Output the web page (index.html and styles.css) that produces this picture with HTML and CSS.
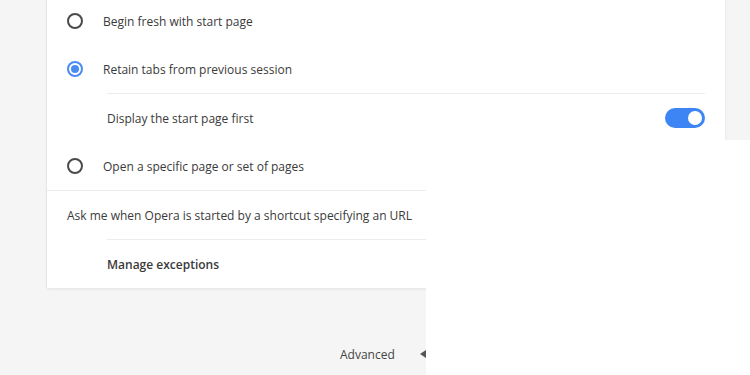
FILE: index.html
```html
<!DOCTYPE html>
<html>
<head>
<meta charset="utf-8">
<link rel="stylesheet" href="styles.css">
</head>
<body>
<div class="page">
  <section class="card">
    <div class="row radio-row">
      <span class="radio"></span>
      <span class="label">Begin fresh with start page</span>
    </div>
    <div class="row radio-row">
      <span class="radio checked"></span>
      <span class="label">Retain tabs from previous session</span>
    </div>
    <div class="row sub-row">
      <span class="label">Display the start page first</span>
      <span class="toggle on"><span class="knob"></span></span>
    </div>
    <div class="row radio-row no-border">
      <span class="radio"></span>
      <span class="label">Open a specific page or set of pages</span>
    </div>
    <div class="row plain-row">
      <span class="label">Ask me when Opera is started by a shortcut specifying an URL</span>
    </div>
    <div class="row sub-row bold-row">
      <span class="label">Manage exceptions</span>
    </div>
  </section>
  <div class="advanced">
    <span class="adv-label">Advanced</span>
    <span class="caret"></span>
  </div>
</div>
<div class="overlay"></div>
</body>
</html>
```

FILE: styles.css
```css
html, body {
  margin: 0;
  padding: 0;
}
body {
  background: #f5f5f5;
  font-family: "Open Sans", "Noto Sans", sans-serif;
  font-size: 12px;
  color: #3a3a3a;
  width: 750px;
  height: 375px;
  overflow: hidden;
  position: relative;
}
.page {
  padding-left: 47px;
  width: 678px;
}
.card {
  background: #ffffff;
  margin-top: -3px;
  box-shadow: 0 1px 3px rgba(0, 0, 0, 0.08), -1px 0 0 rgba(0,0,0,0.03);
  display: flex;
  flex-direction: column;
}
.row {
  height: 48px;
  display: flex;
  align-items: center;
  box-sizing: border-box;
}
.radio-row {
  padding-left: 20px;
}
.radio-row .label {
  margin-left: 20px;
}
.radio {
  width: 16px;
  height: 16px;
  box-sizing: border-box;
  border: 2px solid #4a4a4a;
  border-radius: 50%;
  flex: none;
  position: relative;
}
.radio.checked {
  border-color: #4a8af4;
}
.radio.checked::after {
  content: "";
  position: absolute;
  left: 2px;
  top: 2px;
  width: 8px;
  height: 8px;
  border-radius: 50%;
  background: #4a8af4;
}
.sub-row {
  margin-left: 60px;
  margin-right: 20px;
  border-top: 1px solid #ececec;
  justify-content: space-between;
  height: 49px;
}
.no-border {
  border-bottom: 1px solid #ececec;
  height: 49px;
}
.plain-row {
  padding-left: 20px;
}
.bold-row .label {
  font-weight: 600;
}
.toggle {
  width: 40px;
  height: 20px;
  border-radius: 10px;
  background: #3d85f5;
  display: flex;
  align-items: center;
  justify-content: flex-end;
  padding: 0 3px;
  box-sizing: border-box;
}
.knob {
  width: 14px;
  height: 14px;
  border-radius: 50%;
  background: #ffffff;
}
.advanced {
  display: flex;
  align-items: center;
  gap: 25px;
  margin-top: 57px;
  padding-left: 293px;
  height: 18px;
}
.adv-label {
  color: #444444;
}
.caret {
  width: 0;
  height: 0;
  border-top: 4px solid transparent;
  border-bottom: 4px solid transparent;
  border-right: 6px solid #555555;
}
.overlay {
  position: absolute;
  left: 426px;
  top: 140px;
  right: 0;
  bottom: 0;
  background: #ffffff;
}
```
